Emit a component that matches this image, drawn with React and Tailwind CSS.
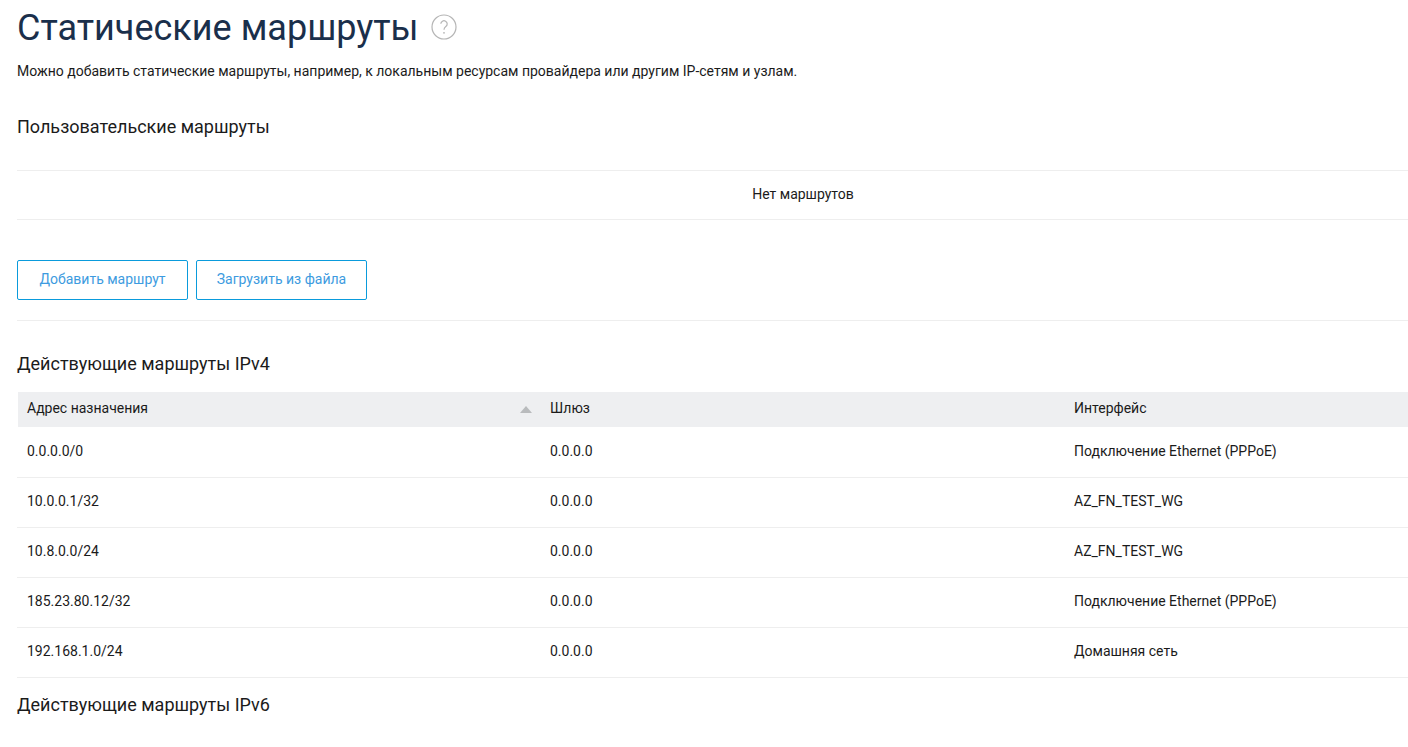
const rows = [
  ["0.0.0.0/0", "0.0.0.0", "Подключение Ethernet (PPPoE)"],
  ["10.0.0.1/32", "0.0.0.0", "AZ_FN_TEST_WG"],
  ["10.8.0.0/24", "0.0.0.0", "AZ_FN_TEST_WG"],
  ["185.23.80.12/32", "0.0.0.0", "Подключение Ethernet (PPPoE)"],
  ["192.168.1.0/24", "0.0.0.0", "Домашняя сеть"],
];

function Help() {
  return (
    <svg width="26" height="26" viewBox="0 0 26 26" className="ml-[12px] mt-[-3px]">
      <circle cx="13" cy="13" r="12" fill="none" stroke="#b5b5b5" strokeWidth="1.2" />
      <path d="M9.8 9.8a3.2 3.2 0 1 1 5 2.8c-1.3.9-1.8 1.6-1.8 3.2" fill="none" stroke="#b5b5b5" strokeWidth="1.2" />
      <circle cx="13" cy="18.8" r="0.9" fill="#b5b5b5" />
    </svg>
  );
}

export default function App() {
  return (
    <div className="h-[747px] w-[1408px] overflow-hidden bg-white pl-[17px] font-['Roboto',sans-serif] text-[14px] text-[#1b1b1b]">
      <div className="flex h-[56px] items-center">
        <h1 className="text-[36px] leading-[56px] font-normal text-[#1a2f4b]">Статические маршруты</h1>
        <Help />
      </div>
      <p className="mt-[5px] h-[20px] leading-[20px]">
        Можно добавить статические маршруты, например, к локальным ресурсам провайдера или другим IP-сетям и узлам.
      </p>
      <h2 className="mt-[33px] h-[26px] text-[18px] leading-[26px] font-normal">Пользовательские маршруты</h2>
      <div className="mt-[30px] flex h-[50px] w-[1572px] items-center justify-center border-y border-[#eeeeee] pb-[2px]">Нет маршрутов</div>
      <div className="mt-[40px] flex gap-[8px]">
        <button className="h-[40px] w-[171px] rounded-[2px] border border-[#0a9bdc] pb-[2px] text-[#3d9be0]">Добавить маршрут</button>
        <button className="h-[40px] w-[171px] rounded-[2px] border border-[#0a9bdc] pb-[2px] text-[#3d9be0]">Загрузить из файла</button>
      </div>
      <div className="mt-[20px] border-t border-[#eeeeee]" />
      <h2 className="mt-[30px] h-[26px] text-[18px] leading-[26px] font-normal">Действующие маршруты IPv4</h2>
      <div className="mt-[15px] ml-px grid h-[35px] grid-cols-[522px_524px_1fr] items-center bg-[#eeeff1] pb-[2px]">
        <div className="relative pl-[9px]">
          Адрес назначения
          <span className="absolute right-[8px] top-[8px] h-0 w-0 border-x-[6px] border-b-[7px] border-x-transparent border-b-[#b9bbbd]" />
        </div>
        <div className="pl-[10px]">Шлюз</div>
        <div className="pl-[10px]">Интерфейс</div>
      </div>
      <div className="pt-px">
        {rows.map((r) => (
          <div key={r[0]} className="grid h-[50px] grid-cols-[523px_524px_1fr] items-center border-b border-[#eeeeee] pb-[2px]">
            {r.map((c, i) => (
              <div key={i} className="pl-[10px]">{c}</div>
            ))}
          </div>
        ))}
      </div>
      <h2 className="mt-[14px] h-[26px] text-[18px] leading-[26px] font-normal">Действующие маршруты IPv6</h2>
    </div>
  );
}
